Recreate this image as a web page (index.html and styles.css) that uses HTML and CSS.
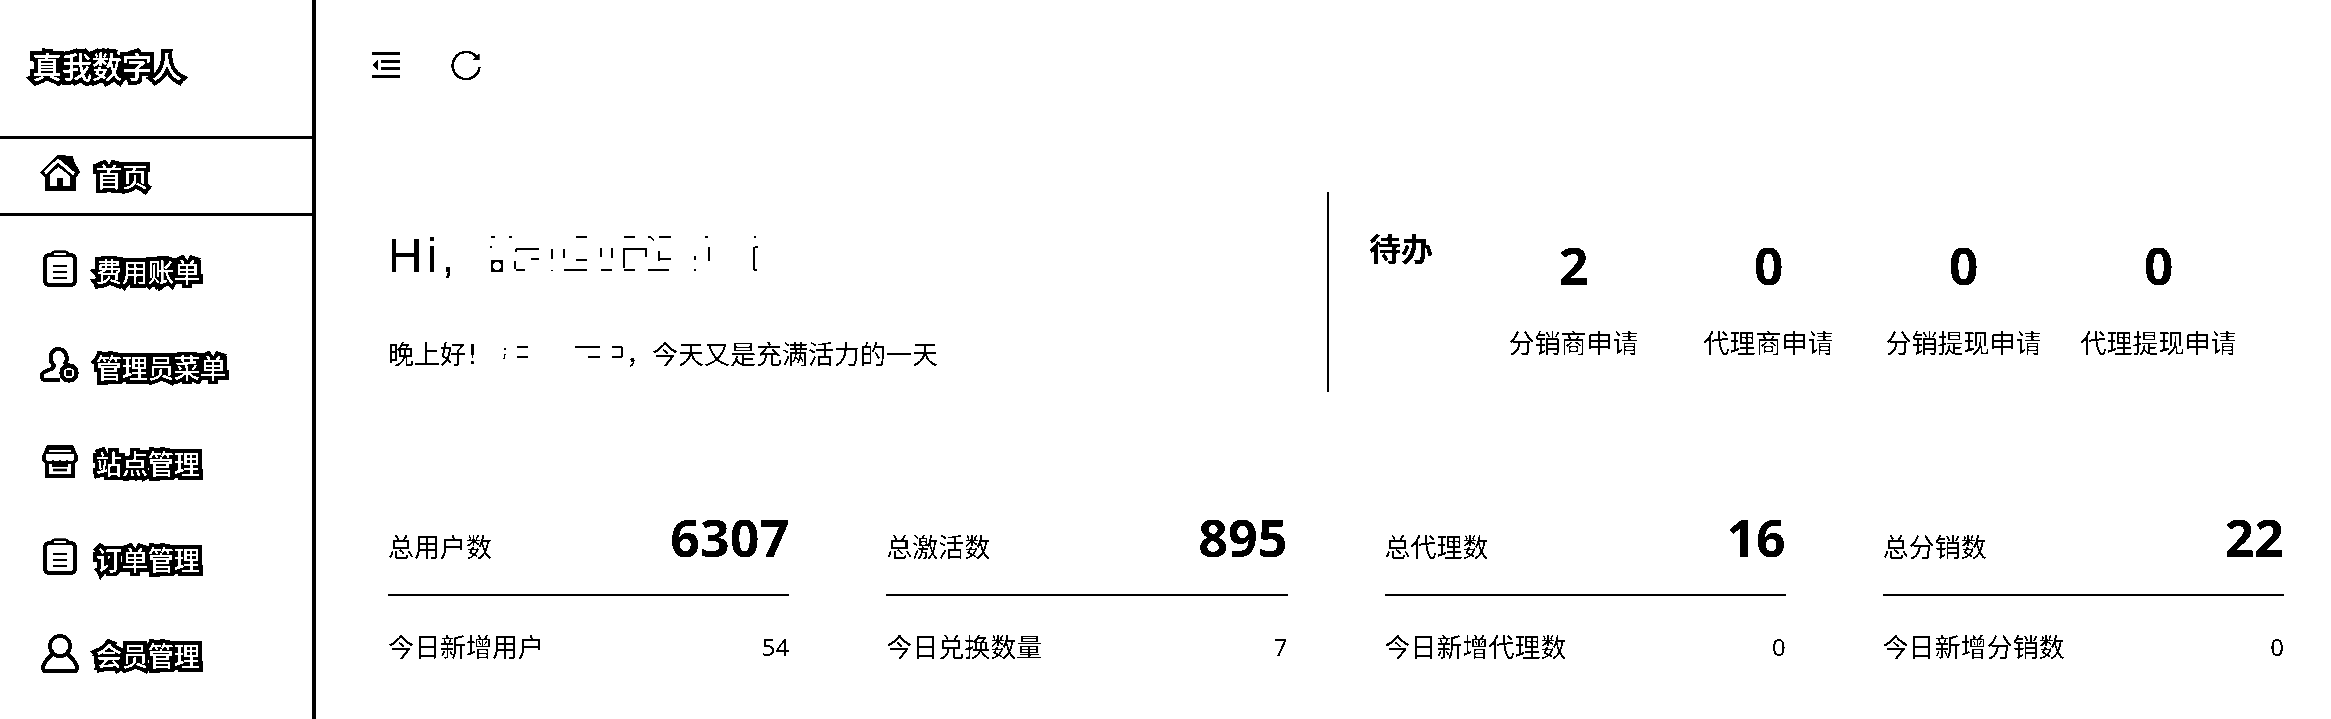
FILE: index.html
```html
<!DOCTYPE html>
<html lang="zh-CN">
<head>
    <meta charset="UTF-8">
    <meta name="viewport" content="width=device-width, initial-scale=1.0">
    <title>真我数字人</title>
    <link rel="stylesheet" href="styles.css">
</head>
<body>
    <div class="app">
        <aside class="sidebar">
            <div class="logo">真我数字人</div>
            <nav class="nav">
                <a class="nav-item nav-home">
                    <svg class="nav-icon" viewBox="0 0 40 40">
                        <path d="M0 17 18 0 33 1 34 6 40 17 36 23 36 36 5 36 5 23Z" fill="#000"/>
                        <path d="M5 18 18 5.500 34 19" fill="none" stroke="#fff" stroke-width="3.500" stroke-linejoin="miter"/>
                        <path d="M10 19 18.500 12 30 21 30 31 23 31 23 23 17 23 17 31 10 31Z" fill="#fff"/>
                    </svg>
                    <span class="nav-text">首页</span>
                </a>
                <a class="nav-item">
                    <svg class="nav-icon" viewBox="0 0 40 40">
                        <rect x="5" y="5" width="30" height="30" rx="4" fill="#fff" stroke="#000" stroke-width="4"/>
                        <path d="M14 3.500H26" stroke="#000" stroke-width="6" stroke-linecap="round"/>
                        <path d="M15 4H25" stroke="#fff" stroke-width="2" stroke-linecap="round"/>
                        <path d="M13 16H27M13 22H27M13 28H27" stroke="#000" stroke-width="2.500"/>
                    </svg>
                    <span class="nav-text">费用账单</span>
                </a>
                <a class="nav-item">
                    <svg class="nav-icon" viewBox="0 0 40 40">
                        <path d="M20 34H5C1 34 1 28 4 26 9 23 14 24 14 19 9 15 9 4 18 3 27 3 29 14 24 19" fill="none" stroke="#000" stroke-width="4" stroke-linejoin="round"/>
                        <circle cx="29" cy="27" r="7.500" fill="#fff" stroke="#000" stroke-width="4.500"/>
                        <circle cx="29" cy="27" r="3.500" fill="#000"/>
                    </svg>
                    <span class="nav-text">管理员菜单</span>
                </a>
                <a class="nav-item">
                    <svg class="nav-icon" viewBox="0 0 40 40">
                        <path d="M7 3H33L38 14V19L35 21V36H5V21L2 19V14Z" fill="#000"/>
                        <path d="M9 9H31" stroke="#fff" stroke-width="2.500"/>
                        <path d="M6 12H34V17C32 20 29 20 27 17 25 20 22 20 20 17 18 20 15 20 13 17 11 20 8 20 6 17Z" fill="#fff"/>
                        <path d="M9 22V32H31V22L28 22 28 25H12V22Z" fill="#fff"/>
                        <path d="M13 28H27" stroke="#000" stroke-width="3"/>
                    </svg>
                    <span class="nav-text">站点管理</span>
                </a>
                <a class="nav-item">
                    <svg class="nav-icon" viewBox="0 0 40 40">
                        <rect x="5" y="5" width="30" height="30" rx="4" fill="#fff" stroke="#000" stroke-width="4"/>
                        <path d="M14 3.500H26" stroke="#000" stroke-width="6" stroke-linecap="round"/>
                        <path d="M15 4H25" stroke="#fff" stroke-width="2" stroke-linecap="round"/>
                        <path d="M13 16H27M13 22H27M13 28H27" stroke="#000" stroke-width="2.500"/>
                    </svg>
                    <span class="nav-text">订单管理</span>
                </a>
                <a class="nav-item">
                    <svg class="nav-icon" viewBox="0 0 40 40">
                        <circle cx="20" cy="12" r="10" fill="#fff" stroke="#000" stroke-width="4"/>
                        <path d="M13 20C8 23 3 30 3 34 3 36 4 37 6 37H34C36 37 37 36 37 34 37 30 32 23 27 20" fill="none" stroke="#000" stroke-width="4"/>
                    </svg>
                    <span class="nav-text">会员管理</span>
                </a>
            </nav>
        </aside>

        <main class="main">
            <div class="toolbar">
                <svg class="tool-fold" viewBox="0 0 28 26">
                    <path d="M0 1.500H28M9 9.500H28M9 16.500H28M0 24.500H28" stroke="#000" stroke-width="3"/>
                    <path d="M0 13 6 8V18Z" fill="#000"/>
                </svg>
                <svg class="tool-refresh" viewBox="0 0 30 30">
                    <path d="M25.500 7A13.500 13.500 0 1 0 28.500 17" fill="none" stroke="#000" stroke-width="2.500"/>
                    <path d="M28.500 3V10H21.500Z" fill="#000"/>
                </svg>
            </div>

            <section class="welcome">
                <div class="hello">
                    <div class="hello-title">
                        <span class="hi">Hi,</span>
                        <svg class="name-mask" viewBox="0 0 290 50">
                            <path d="M12 6H16M30 6H33M97 6H108M145 6H156M169 6H172L175 10M180 6H192M226 6H229M275 6H277M12 15V17M37 18H60M37 18V21M52 28H60M73 18V28M85 18V27M97 29H108M122 17V26M133 17V27M145 17V37M146 18H167V26M180 20V30M180 28H192M216 25V29M230 16V30M275 16V39M276 16H279M275 39H278M36 30V38M37 39H46M73 39V40M85 39H97M97 39H108M122 39H133M145 39H156M169 39H190M216 38V40" fill="none" stroke="#000" stroke-width="1.500"/>
                            <rect x="12" y="29" width="12" height="12" fill="#000"/>
                            <circle cx="18" cy="35" r="4" fill="#fff"/>
                        </svg>
                    </div>
                    <p class="hello-text">晚上好！<svg class="greet-mask" viewBox="0 0 134 40"><path d="M13 14V16M13 20 12 25M25 13H36M25 23H36M83 13H108M96 23H108M120 13H130M130 13V23M120 23H130" fill="none" stroke="#000" stroke-width="1.500"/></svg>，今天又是充满活力的一天</p>
                </div>
                <div class="todo">
                    <h2 class="todo-title">待办</h2>
                    <div class="todo-list">
                        <div class="todo-item"><b class="todo-num">2</b><span class="todo-name">分销商申请</span></div>
                        <div class="todo-item"><b class="todo-num">0</b><span class="todo-name">代理商申请</span></div>
                        <div class="todo-item"><b class="todo-num">0</b><span class="todo-name">分销提现申请</span></div>
                        <div class="todo-item"><b class="todo-num">0</b><span class="todo-name">代理提现申请</span></div>
                    </div>
                </div>
            </section>

            <section class="stats">
                <div class="stat">
                    <div class="stat-head"><span class="stat-label">总用户数</span><b class="stat-value">6307</b></div>
                    <div class="stat-foot"><span>今日新增用户</span><span class="stat-today">54</span></div>
                </div>
                <div class="stat">
                    <div class="stat-head"><span class="stat-label">总激活数</span><b class="stat-value">895</b></div>
                    <div class="stat-foot"><span>今日兑换数量</span><span class="stat-today">7</span></div>
                </div>
                <div class="stat">
                    <div class="stat-head"><span class="stat-label">总代理数</span><b class="stat-value">16</b></div>
                    <div class="stat-foot"><span>今日新增代理数</span><span class="stat-today">0</span></div>
                </div>
                <div class="stat">
                    <div class="stat-head"><span class="stat-label">总分销数</span><b class="stat-value">22</b></div>
                    <div class="stat-foot"><span>今日新增分销数</span><span class="stat-today">0</span></div>
                </div>
            </section>
        </main>
    </div>
</body>
</html>
```

FILE: styles.css
```css
html, body { margin: 0; height: 719px; overflow: hidden; background: #fff; }
body { font-family: "Noto Sans", "Noto Sans CJK SC", sans-serif; color: #000; }
.app { display: flex; height: 719px; background: #fff; filter: grayscale(1) contrast(100); }

/* sidebar */
.sidebar { width: 312px; flex: none; border-right: 4px solid #000; }
.logo {
    height: 136px; padding: 0 0 7px 32px; box-sizing: border-box;
    display: flex; align-items: center;
    font-size: 30px; font-weight: 500; color: #fff;
    -webkit-text-stroke: 8px #000; paint-order: stroke fill;
}
.nav-home.nav-item { height: 80px; box-sizing: border-box; border-top: 3px solid #000; border-bottom: 3px solid #000; margin-bottom: 8px; }
.nav-item { display: flex; align-items: center; height: 96px; padding-left: 40px; gap: 16px; }
.nav-icon { width: 40px; height: 40px; flex: none; margin-top: -4px; }
.nav-home .nav-icon { margin-top: -2px; }
.nav-home .nav-text { margin-top: 2px; }
.nav-text {
    font-size: 26px; font-weight: 500; line-height: 30px; color: #fff;
    -webkit-text-stroke: 8px #000; paint-order: stroke fill;
}

/* main */
.main { flex: 1; min-width: 0; }
.toolbar { display: flex; align-items: center; height: 130px; padding-left: 56px; }
.tool-fold { width: 28px; height: 26px; }
.tool-refresh { width: 30px; height: 30px; margin-left: 51px; }

.welcome { display: flex; height: 200px; margin-top: 62px; }
.hello { flex: 0 0 939px; padding-left: 72px; padding-top: 37px; }
.hello-title { display: flex; align-items: center; height: 54px; }
.hi { font-family: "Liberation Sans", sans-serif; font-size: 48px; letter-spacing: 4px; line-height: 54px; }
.name-mask { width: 290px; height: 50px; margin-left: 20px; }
.hello-text { margin: 51px 0 0; font-size: 26px; line-height: 40px; white-space: nowrap; }
.greet-mask { width: 134px; height: 40px; vertical-align: top; }

.todo { flex: 1; display: flex; border-left: 2px solid #000; }
.todo-title { margin: 38px 43px 0 40px; font-size: 32px; line-height: 38px; font-weight: 700; white-space: nowrap; }
.todo-list { display: grid; grid-template-columns: repeat(4, 195px); padding-top: 47px; }
.todo-item { display: flex; flex-direction: column; align-items: center; }
.todo-num { font-size: 52px; line-height: 52px; }
.todo-name { margin-top: 37px; font-size: 26px; line-height: 30px; white-space: nowrap; }

.stats { display: grid; grid-template-columns: repeat(4, 1fr); gap: 97px; margin-top: 119px; padding: 0 47px 0 72px; }
.stat-head { display: flex; justify-content: space-between; align-items: flex-end; height: 52px; padding-bottom: 31px; border-bottom: 2px solid #000; }
.stat-label { font-size: 26px; line-height: 30px; margin-bottom: 1px; }
.stat-value { font-size: 52px; line-height: 52px; }
.stat-foot { display: flex; justify-content: space-between; align-items: center; padding-top: 36px; font-size: 26px; line-height: 30px; }
.stat-today { font-size: 24px; }
```
